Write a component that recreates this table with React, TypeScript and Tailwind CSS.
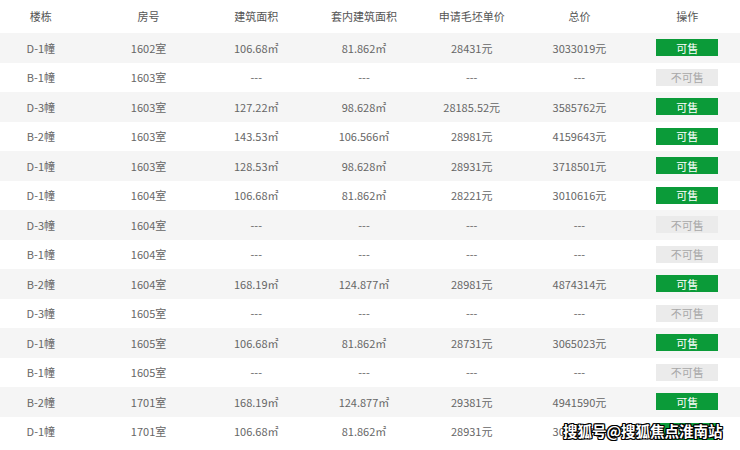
import React from 'react';

type Row = {
  building: string;
  room: string;
  area?: string;
  inner?: string;
  unit?: string;
  total?: string;
  onSale: boolean;
};

const rows: Row[] = [
  { building: 'D-1幢', room: '1602室', area: '106.68㎡', inner: '81.862㎡', unit: '28431元', total: '3033019元', onSale: true },
  { building: 'B-1幢', room: '1603室', onSale: false },
  { building: 'D-3幢', room: '1603室', area: '127.22㎡', inner: '98.628㎡', unit: '28185.52元', total: '3585762元', onSale: true },
  { building: 'B-2幢', room: '1603室', area: '143.53㎡', inner: '106.566㎡', unit: '28981元', total: '4159643元', onSale: true },
  { building: 'D-1幢', room: '1603室', area: '128.53㎡', inner: '98.628㎡', unit: '28931元', total: '3718501元', onSale: true },
  { building: 'D-1幢', room: '1604室', area: '106.68㎡', inner: '81.862㎡', unit: '28221元', total: '3010616元', onSale: true },
  { building: 'D-3幢', room: '1604室', onSale: false },
  { building: 'B-1幢', room: '1604室', onSale: false },
  { building: 'B-2幢', room: '1604室', area: '168.19㎡', inner: '124.877㎡', unit: '28981元', total: '4874314元', onSale: true },
  { building: 'D-3幢', room: '1605室', onSale: false },
  { building: 'D-1幢', room: '1605室', area: '106.68㎡', inner: '81.862㎡', unit: '28731元', total: '3065023元', onSale: true },
  { building: 'B-1幢', room: '1605室', onSale: false },
  { building: 'B-2幢', room: '1701室', area: '168.19㎡', inner: '124.877㎡', unit: '29381元', total: '4941590元', onSale: true },
  { building: 'D-1幢', room: '1701室', area: '106.68㎡', inner: '81.862㎡', unit: '28931元', total: '3086359元', onSale: true },
];

const headers = ['楼栋', '房号', '建筑面积', '套内建筑面积', '申请毛坯单价', '总价', '操作'];

const font = { fontFamily: '"Noto Sans CJK SC", "Noto Sans", sans-serif' };

export default function App() {
  return (
    <div className="relative w-[740px] h-[450px] overflow-hidden bg-white" style={font}>
      <div className="w-[754px] -ml-[13px] text-[11px] text-[#666]">
        {/* Header */}
        <div className="grid grid-cols-7 h-[33px] items-center text-[#555]">
          {headers.map((h) => (
            <div key={h} className="text-center">{h}</div>
          ))}
        </div>

        {/* Rows */}
        {rows.map((r, idx) => (
          <div
            key={idx}
            className={`grid grid-cols-7 h-[29.5px] items-center ${idx % 2 === 0 ? 'bg-[#f5f5f5]' : 'bg-white'}`}
          >
            <div className="text-center">{r.building}</div>
            <div className="text-center">{r.room}</div>
            <div className="text-center">{r.area ?? '---'}</div>
            <div className="text-center">{r.inner ?? '---'}</div>
            <div className="text-center">{r.unit ?? '---'}</div>
            <div className="text-center">{r.total ?? '---'}</div>
            <div className="flex justify-center">
              {r.onSale ? (
                <span className="w-[62px] h-[17px] flex items-center justify-center bg-[#0b9b39] text-white text-[11px]">
                  可售
                </span>
              ) : (
                <span className="w-[62px] h-[17px] flex items-center justify-center bg-[#ebebeb] text-[#a8a8a8] text-[11px]">
                  不可售
                </span>
              )}
            </div>
          </div>
        ))}
      </div>

      {/* Watermark */}
      <div
        className="absolute left-[563px] top-[424px] text-[14.5px] font-semibold text-white leading-none"
        style={{ textShadow: '1px 1px 0 #000, -1px -1px 0 #000, 1px -1px 0 #000, -1px 1px 0 #000, 1px 0 0 #000, -1px 0 0 #000, 0 1px 0 #000, 0 -1px 0 #000' }}
      >
        搜狐号@搜狐焦点淮南站
      </div>
    </div>
  );
}
